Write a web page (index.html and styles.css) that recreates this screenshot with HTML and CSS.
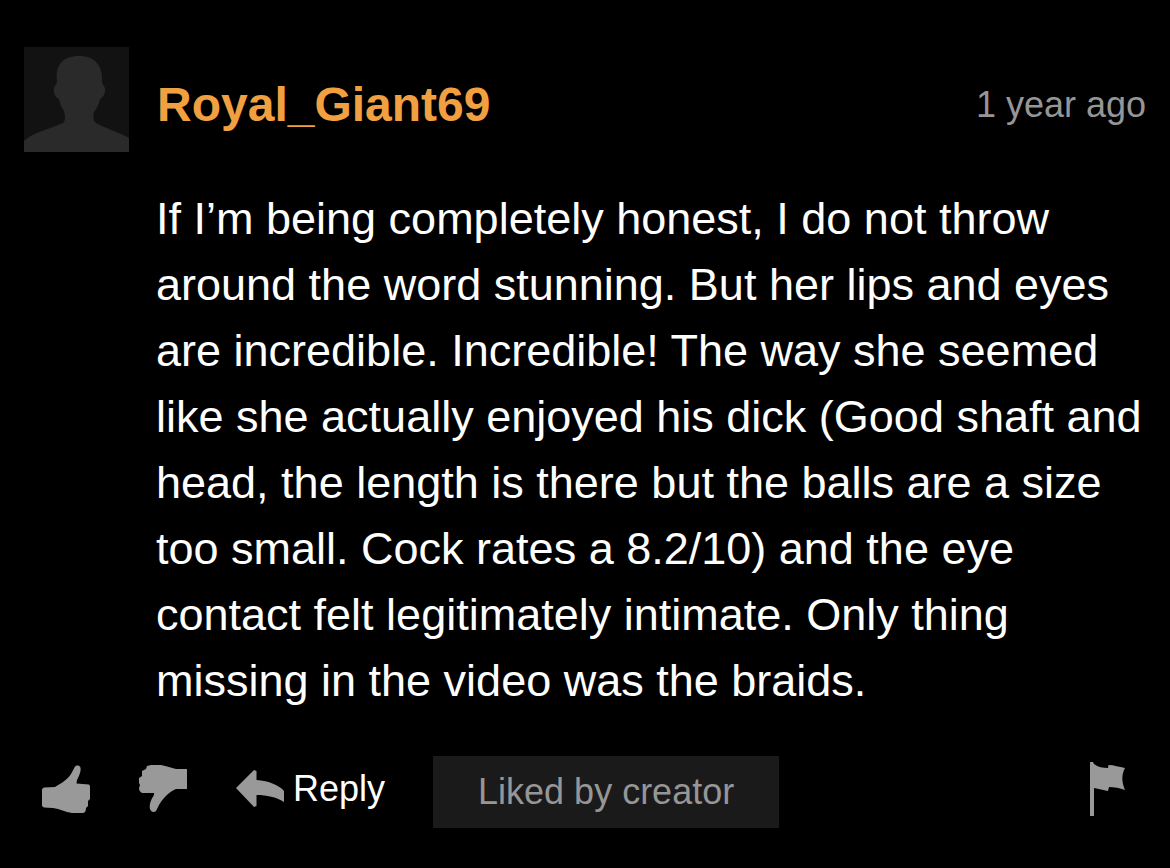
FILE: index.html
```
<!DOCTYPE html>
<html lang="en">
<head>
  <meta charset="utf-8" />
  <title>Comments</title>
  <link rel="stylesheet" href="styles.css">
</head>
<body>

<article class="comment">
  <header class="comment-head">
    <svg class="avatar" viewBox="0 0 105 105" aria-hidden="true">
      <rect width="105" height="105" fill="#121212"/>
      <path fill="#2a2a2a" d="M0 105V94C8 86 22 83 39 76C42 74 41 68 40 64C37 60 36 56 35 52C31 51 29 44 30 41C31 38 33 37 33 34C31 18 39 9 55 9C71 9 79 19 78 34C78 37 80 39 81 41C82 45 79 51 76 52C75 57 73 61 70 65C69 69 69 74 72 76C85 83 97 86 105 91V105Z"/>
    </svg>
    <div class="head-text">
      <a class="user-name" href="#">Royal_Giant69</a>
      <time class="date">1 year ago</time>
    </div>
  </header>

  <p class="message">If I’m being completely honest, I do not throw around the word stunning. But her lips and eyes are incredible. Incredible! The way she seemed like she actually enjoyed his dick (Good shaft and head, the length is there but the balls are a size too small. Cock rates a 8.2/10) and the eye contact felt legitimately intimate. Only thing missing in the video was the braids.</p>

  <footer class="actions">
    <div class="action-list">
      <button class="icon-btn" type="button" aria-label="Like">
        <svg width="48" height="48" viewBox="0 0 48 48">
          <path d="M0 24L2 22.500L13 22C18 19 25 15 29 9L33 1.500C34 0 37 0 38 1.500C40 5 37 11 35 15L34.500 18.500L47 19.500L48 21V34L46 36V41L44 43C44 46 43 48 40 48H30C23 47 18 44 11 43L2 42.500L0 41Z"/>
        </svg>
      </button>
      <button class="icon-btn" type="button" aria-label="Dislike">
        <svg width="48" height="48" viewBox="0 0 48 48">
          <path d="M8 1L12 0H22C28 1 32 3 37 4H48V24H37C30 27 24 33 20 40L17 46C15 48 12 47 11 44C10 39 12 35 15 30L15 28H3C1 27 0 25 0 23L1 20L0 18V13L3 11V6L7 4Z"/>
        </svg>
      </button>
      <button class="reply-btn" type="button">
        <svg width="48" height="38" viewBox="0 0 48 38">
          <path d="M0 18L18 0L20.500 1V10C33 11 43 15 48 21V32C40 27 31 25 20.500 25V36L18 37Z"/>
        </svg>
        Reply
      </button>
    </div>
    <span class="liked">Liked by creator</span>
    <button class="flag-btn" type="button" aria-label="Flag">
      <svg width="36" height="54" viewBox="0 0 36 54">
        <path d="M0 0H3L4 2C8 5 13 6 18 6L18.500 3C24 3 29 5 35 6C31 13 32 21 35 28C30 26 24 25 19 25L18 29C13 28 9 27 4 26V54H0Z"/>
      </svg>
    </button>
  </footer>
</article>

</body>
</html>
```
FILE: styles.css
```
*{
	box-sizing: border-box;
	margin: 0;
	padding: 0;
}
body{
	background: #000;
	color: #fff;
	font-family: "Liberation Sans", Arial, sans-serif;
}
.comment{
	padding: 47px 24px 40px;
}
.comment-head{
	display: flex;
	align-items: center;
}
.avatar{
	flex: none;
	width: 105px;
	height: 105px;
	margin-right: 28px;
}
.head-text{
	display: flex;
	flex: 1;
	align-items: center;
	justify-content: space-between;
	padding-top: 10px;
}
.user-name{
	color: #f0a040;
	font-size: 48px;
	font-weight: bold;
	line-height: 56px;
	text-decoration: none;
}
.date{
	color: #969696;
	font-size: 36px;
	line-height: 48px;
}
.message{
	margin: 34px 0 42px;
	padding-left: 132px;
	font-size: 45px;
	line-height: 66px;
}
.actions{
	display: flex;
	align-items: center;
	padding: 0 20px 0 18px;
}
.actions button{
	border: none;
	background: none;
	font: inherit;
	color: #fff;
	cursor: pointer;
}
.actions svg{
	display: block;
	fill: #999;
}
.action-list{
	display: flex;
	align-items: center;
	gap: 49px;
	margin-right: 48px;
	padding-bottom: 6px;
}
.actions .reply-btn{
	display: flex;
	align-items: center;
	gap: 9px;
	font-size: 36px;
	line-height: 48px;
}
.liked{
	padding: 12px 45px;
	background: #1b1a1b;
	color: #969696;
	font-size: 36px;
	line-height: 48px;
}
.actions .flag-btn{
	margin-left: auto;
	padding-bottom: 6px;
}
```
